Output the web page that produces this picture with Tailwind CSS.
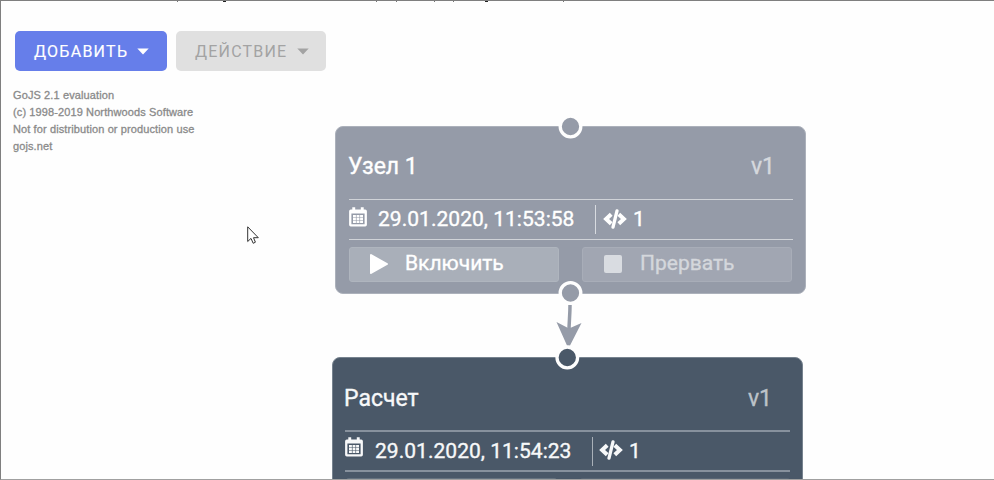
<!DOCTYPE html>
<html lang="ru">
<head>
<meta charset="utf-8">
<title>Узлы</title>
<script src="https://cdn.jsdelivr.net/npm/@tailwindcss/browser@4"></script>
</head>
<body class="bg-[#fefefe]">
<svg class="hidden">
  <symbol id="calendar" viewBox="0 0 18 20">
    <path fill="currentColor" fill-rule="evenodd" d="M3.300 0.300h2.900v2.300h5.600V0.300h2.900v2.300h1.500a1.700 1.700 0 0 1 1.700 1.700v13.400a1.700 1.700 0 0 1-1.700 1.700H1.800a1.700 1.700 0 0 1-1.700-1.700V4.300A1.700 1.700 0 0 1 1.800 2.600h1.500zM2.400 6.600v10.600h13.200V6.600z"/>
    <path fill="currentColor" d="M4 8h2.900v2.400H4zm3.550 0h2.900v2.400H7.550zm3.550 0H14v2.400h-2.900zM4 11h2.900v2.400H4zm3.550 0h2.900v2.400H7.550zm3.550 0H14v2.400h-2.900zM4 14h2.900v1.900H4zm3.550 0h2.900v1.900H7.550zm3.550 0H14v1.900h-2.900z"/>
  </symbol>
  <symbol id="code" viewBox="0 0 24 20">
    <path fill="none" stroke="currentColor" stroke-width="4" d="M8.200 5.200L3.100 10l5.100 4.800M15.800 5.200L20.900 10l-5.100 4.800"/>
    <path fill="none" stroke="currentColor" stroke-width="3.300" stroke-linecap="round" d="M14 1.900L10 18.100"/>
  </symbol>
</svg>
<main class="relative w-[994px] h-[480px] overflow-hidden border-t border-l border-b border-t-[#7f7f7f] border-l-[#7f7f7f] border-b-[#a0a0a0] font-['Roboto','Noto_Sans',sans-serif]">
  <svg class="absolute left-0 top-0 w-[600px] h-px" fill="#777">
    <path d="M176 0h1v1h-1zM375 0h1v1h-1zM395 0h1v1h-1zM433 0h1v1h-1zM452 0h1v1h-1zM562 0h1v1h-1z"/>
    <path fill="#222" d="M222 0h3v1h-3zM484 0h3v1h-3z"/>
  </svg>

  <div class="flex gap-[9px] pl-[14px] pt-[30px]">
    <button class="flex items-center w-[152px] h-10 pl-[19px] rounded-[5px] bg-[#667eea] text-white text-[16px] tracking-[1.25px] [-webkit-text-stroke:0.15px]"><span class="w-[103px] pt-px text-left whitespace-nowrap">ДОБАВИТЬ</span><svg class="w-[12px] h-[7px] mt-px" viewBox="0 0 12 7"><path fill="currentColor" d="M.3 .5h11.400L6 6.500z"/></svg></button>
    <button class="flex items-center w-[150px] h-10 pl-[19px] rounded-[5px] bg-[#e0e0e0] text-[#a3a3a3] text-[16px] tracking-[1.2px]"><span class="w-[102px] pt-px text-left whitespace-nowrap">ДЕЙСТВИЕ</span><svg class="w-[12px] h-[7px] mt-px" viewBox="0 0 12 7"><path fill="currentColor" d="M.3 .5h11.400L6 6.500z"/></svg></button>
  </div>
  <p class="pl-[12px] pt-[16px] text-[11px] tracking-[0.11px] leading-[17px] text-[#8a8a8a] [-webkit-text-stroke:0.3px_#8a8a8a] font-['Liberation_Sans',sans-serif]">GoJS 2.1 evaluation<br>(c) 1998-2019 Northwoods Software<br>Not for distribution or production use<br>gojs.net</p>

  <section class="absolute left-[334px] top-[125px] w-[471px] h-[168px] rounded-[8px] border border-[#acb1bb] bg-[#959ba8] px-[12px] text-white text-[23px] [-webkit-text-stroke:0.35px]">
    <div class="flex items-center justify-between h-[72px] pt-[9px] pr-[18px]"><h2>Узел 1</h2><span class="text-[#d5d8dd]">v1</span></div>
    <div class="flex items-center ml-px w-[444px] h-[41px] border-y border-[#d0d3d8] text-[21px]">
      <svg class="w-[18px] h-[20px] mb-[6px] mr-[11px]"><use href="#calendar"/></svg>
      <span class="w-[217px] whitespace-nowrap pt-px tracking-[0.03px]">29.01.2020, 11:53:58</span>
      <i class="w-px h-[29px] bg-[#d8dbe0] mr-[7px]"></i>
      <svg class="w-[24px] h-[20px] mr-[6px] mb-[2px]"><use href="#code"/></svg>
      <span class="pt-px">1</span>
    </div>
    <div class="flex gap-[23px] pt-[7px] pl-px text-[21px]">
      <button class="flex items-center w-[210px] h-[35px] pl-[19px] rounded-[3px] border border-[#afb5be] bg-[#a9afb9]"><svg class="w-[20px] h-[22px] mr-[16px] mb-[2px]" viewBox="0 0 20 22"><path fill="currentColor" stroke="currentColor" stroke-width="2" stroke-linejoin="round" d="M2 2l16 9L2 20z"/></svg><span class="pb-px">Включить</span></button>
      <button class="flex items-center w-[210px] h-[35px] pl-[21px] rounded-[3px] border border-[#a8adb8] bg-[#a1a6b2] text-[#d4d7dc]"><i class="w-[18px] h-[18px] rounded-[2px] bg-[#d9dce1] mr-[18px] mb-[2px]"></i><span class="pb-px">Прервать</span></button>
    </div>
  </section>

  <section class="absolute left-[331px] top-[356px] w-[471px] h-[168px] rounded-[8px] border border-[#77838f] bg-[#4a5868] px-[12px] text-[#f7f8f9] text-[23px] [-webkit-text-stroke:0.35px]">
    <div class="flex items-center justify-between h-[72px] pt-[10px] pr-[18px]"><h2 class="-ml-px">Расчет</h2><span class="text-[#bdc3c9]">v1</span></div>
    <div class="flex items-center w-[445px] h-[42px] border-y-2 border-[#87919d] text-[21px]">
      <svg class="w-[18px] h-[20px] mb-[8px] mr-[12px]"><use href="#calendar"/></svg>
      <span class="w-[217px] whitespace-nowrap pt-px tracking-[0.03px]">29.01.2020, 11:54:23</span>
      <i class="w-px h-[29px] bg-[#a9b0b8] mr-[6px]"></i>
      <svg class="w-[24px] h-[20px] mr-[6px] mb-[2px]"><use href="#code"/></svg>
      <span class="pt-px">1</span>
    </div>
    <div class="flex gap-[23px] pt-[6px] pl-px">
      <i class="w-[211px] h-[36px] rounded-[3px] bg-[#65727f]"></i>
      <i class="w-[211px] h-[36px] rounded-[3px] bg-[#586574]"></i>
    </div>
  </section>

  <svg class="absolute left-[539px] top-[109px] w-[60px] h-[270px]" viewBox="540 110 60 270">
    <path d="M570 305C570 317 569 320 569 332" fill="none" stroke="#959ba8" stroke-width="3.500"/>
    <path d="M556.500 322L569 328.500L581.500 323L570 345.500H567z" fill="#959ba8"/>
    <g stroke="#fefefe" stroke-width="3.300">
      <circle cx="570.500" cy="126.500" r="10.300" fill="#959ba8"/>
      <circle cx="570.500" cy="293" r="10.300" fill="#959ba8"/>
      <circle cx="567.300" cy="357.500" r="10.300" fill="#4a5868"/>
    </g>
  </svg>

  <svg class="absolute left-[246px] top-[225px] w-[14px] h-[20px]" viewBox="0 0 14 20"><path d="M.7 .8V15.500L4 12.400L6.200 17.300L8.400 16.200L6.500 11.700H11.300z" fill="#fff" stroke="#333" stroke-width="1"/></svg>
</main>
</body>
</html>
